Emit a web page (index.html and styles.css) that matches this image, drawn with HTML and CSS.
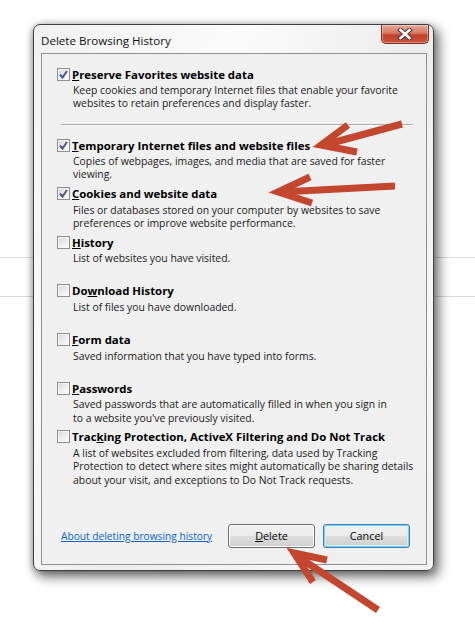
FILE: index.html
```html
<!DOCTYPE html>
<html lang="en">
<head>
  <meta charset="UTF-8" />
  <title>Delete Browsing History</title>
  <link rel="stylesheet" href="styles.css">
</head>
<body>
  <div class="dialog">
    <div class="titlebar">
      <span class="title">Delete Browsing History</span>
      <button class="close" type="button" aria-label="Close">
        <svg width="16" height="12" viewBox="0 0 16 12">
          <path d="M3.5 2 L12.5 10 M12.5 2 L3.5 10" stroke="#4a3a38" stroke-width="4.6" stroke-linecap="square"/>
          <path d="M3.5 2 L12.5 10 M12.5 2 L3.5 10" stroke="#fff" stroke-width="2.6" stroke-linecap="square"/>
        </svg>
      </button>
    </div>

    <div class="client">
      <div class="item">
        <div class="head"><span class="box checked"></span><b><u>P</u>reserve Favorites website data</b></div>
        <p class="desc">Keep cookies and temporary Internet files that enable your favorite<br>websites to retain preferences and display faster.</p>
      </div>

      <div class="sep"></div>

      <div class="item">
        <div class="head"><span class="box checked"></span><b><u>T</u>emporary Internet files and website files</b></div>
        <p class="desc">Copies of webpages, images, and media that are saved for faster<br>viewing.</p>
      </div>
      <div class="item">
        <div class="head"><span class="box checked"></span><b><u>C</u>ookies and website data</b></div>
        <p class="desc">Files or databases stored on your computer by websites to save<br>preferences or improve website performance.</p>
      </div>
      <div class="item">
        <div class="head"><span class="box"></span><b><u>H</u>istory</b></div>
        <p class="desc">List of websites you have visited.</p>
      </div>
      <div class="item">
        <div class="head"><span class="box"></span><b>Do<u>w</u>nload History</b></div>
        <p class="desc">List of files you have downloaded.</p>
      </div>
      <div class="item">
        <div class="head"><span class="box"></span><b><u>F</u>orm data</b></div>
        <p class="desc">Saved information that you have typed into forms.</p>
      </div>
      <div class="item">
        <div class="head"><span class="box"></span><b><u>P</u>asswords</b></div>
        <p class="desc">Saved passwords that are automatically filled in when you sign in<br>to a website you've previously visited.</p>
      </div>
      <div class="item">
        <div class="head"><span class="box"></span><b>Trac<u>k</u>ing Protection, ActiveX Filtering and Do Not Track</b></div>
        <p class="desc">A list of websites excluded from filtering, data used by Tracking<br>Protection to detect where sites might automatically be sharing details<br>about your visit, and exceptions to Do Not Track requests.</p>
      </div>

      <div class="footer">
        <a href="#" class="help">About deleting browsing history</a>
        <div class="buttons">
          <button type="button" class="btn"><u>D</u>elete</button>
          <button type="button" class="btn default">Cancel</button>
        </div>
      </div>
    </div>
  </div>

  <!-- red annotation arrows drawn over the screenshot -->
  <svg class="arrows" width="475" height="624" viewBox="0 0 475 624">
    <g stroke="#c2472e" stroke-width="7" fill="none" stroke-linejoin="miter">
      <path d="M402 124 L324 145"/>
      <path d="M348 125 L321 145 L357 152"/>
      <path d="M395 186 L281 192"/>
      <path d="M310 177 L278 192 L312 203"/>
      <path d="M378 610 L297 556"/>
      <path d="M327 560 L294 553 L313 582"/>
    </g>
  </svg>
</body>
</html>
```

FILE: styles.css
```css
body {
  margin: 0;
  width: 475px;
  height: 624px;
  font-family: "Open Sans", "Noto Sans", sans-serif;
  font-size: 10.4px;
  color: #000;
  background:
    linear-gradient(#dcdcdc, #dcdcdc) 0 257px / 100% 1px no-repeat,
    linear-gradient(#dcdcdc, #dcdcdc) 0 296px / 100% 1px no-repeat,
    #fff;
  overflow: hidden;
  position: relative;
}

.dialog {
  box-sizing: border-box;
  width: 401px;
  height: 547px;
  margin: 24px 0 0 33px;
  padding: 0 6px 5px 7px;
  border: 1px solid #3f3f3f;
  border-radius: 7px;
  background: linear-gradient(120deg, #f1f1f1 0%, #fbfbfb 30%, #ececec 55%, #f7f7f7 80%, #f2f2f2 100%);
  box-shadow: 4px 5px 12px 1px rgba(0,0,0,0.55), -1px 1px 6px rgba(0,0,0,0.25);
  display: flex;
  flex-direction: column;
}

.titlebar {
  height: 28px;
  display: flex;
  justify-content: space-between;
  align-items: flex-start;
}
.title {
  font-size: 11.6px;
  margin-top: 8px;
  color: #111;
}
.close {
  width: 48px;
  height: 19px;
  margin-right: -2px;
  padding: 0;
  border: 1px solid #7b3024;
  border-top: none;
  border-radius: 0 0 5px 5px;
  background: linear-gradient(#e7a99a 0%, #d77966 45%, #c4412a 55%, #c8553d 100%);
  box-shadow: inset 0 0 0 1px rgba(255,255,255,0.35);
  display: flex;
  align-items: center;
  justify-content: center;
}

.client {
  flex: 1;
  background: #f0f0f0;
  border: 1px solid #8d8f94;
  padding-top: 12px;
}

.item {
  height: 48.67px;
}
.item:first-child {
  height: 49px;
}
.head {
  display: flex;
  align-items: center;
  height: 16px;
  padding-left: 15px;
}
.head b {
  margin-left: 2px;
  font-size: 11.4px;
  font-weight: 700;
}
.box {
  box-sizing: border-box;
  width: 13px;
  height: 13px;
  border: 1px solid #8e8f8f;
  background: linear-gradient(135deg, #d8d8d8, #f7f7f7 80%);
  box-shadow: inset 0 0 0 1px #f4f4f4;
}
.box.checked {
  background:
    url("data:image/svg+xml,%3Csvg xmlns='http://www.w3.org/2000/svg' width='11' height='11'%3E%3Cpath d='M2 5.5 L4.5 8.5 L9 2' stroke='%23475a92' stroke-width='2' fill='none'/%3E%3C/svg%3E") center / 11px 11px no-repeat,
    linear-gradient(135deg, #d8d8d8, #f7f7f7 80%);
}
.desc {
  margin: 2px 0 0 31px;
  line-height: 13.3px;
  color: #1a1a1a;
}

.sep {
  margin: 9px 13px 11px 19px;
  border-top: 1px solid #a9a9a9;
  border-bottom: 1px solid #fff;
}

.footer {
  margin-top: 46px;
  padding: 0 16px 0 19px;
  display: flex;
  justify-content: space-between;
  align-items: center;
}
.help {
  color: #0b63c8;
  font-size: 10.2px;
}
.buttons {
  display: flex;
  gap: 8px;
}
.btn {
  width: 87px;
  height: 24px;
  padding: 0;
  font-family: inherit;
  font-size: 10.8px;
  color: #000;
  border: 1px solid #707070;
  border-radius: 3px;
  background: linear-gradient(#f2f2f2 0%, #ebebeb 50%, #dddddd 51%, #cfcfcf 100%);
  box-shadow: inset 0 0 0 1px #fcfcfc;
}
.btn.default {
  border-color: #3c7fb1;
  box-shadow: inset 0 0 0 1px #7fd2f7, inset 0 0 0 2px #d6f0fb;
}

.arrows {
  position: absolute;
  left: 0;
  top: 0;
  pointer-events: none;
}
```
